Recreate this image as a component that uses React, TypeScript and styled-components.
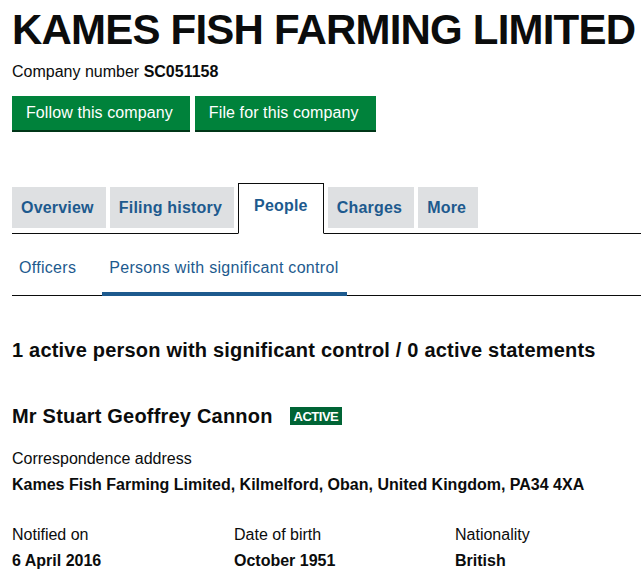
import styled, { createGlobalStyle } from 'styled-components'

const GlobalStyle = createGlobalStyle`
  body {
    margin: 0;
    background: #ffffff;
    color: #0b0c0c;
    font-family: "Liberation Sans", Arial, sans-serif;
  }
`

const Page = styled.main`
  padding: 0 0 0 12px;
  overflow: hidden;
  width: 641px;
  box-sizing: border-box;
`

const Heading = styled.h1`
  margin: 0;
  padding-top: 7px;
  font-size: 42px;
  line-height: 45px;
  font-weight: 700;
  white-space: nowrap;
  letter-spacing: -0.8px;
`

const CompanyNumber = styled.p`
  margin: 10px 0 0;
  font-size: 16px;
  line-height: 20px;
  strong { font-weight: 700; }
`

const Actions = styled.div`
  display: flex;
  gap: 5px;
  margin-top: 14px;
`

const Button = styled.a`
  display: inline-flex;
  align-items: center;
  height: 34px;
  padding: 0 17px 0 14px;
  background: #00823b;
  color: #ffffff;
  font-size: 16px;
  letter-spacing: 0.1px;
  box-shadow: 0 2px 0 #003618;
  text-decoration: none;
  cursor: pointer;
`

const Tabs = styled.nav`
  display: flex;
  align-items: flex-end;
  gap: 4px;
  margin-top: 53px;
  border-bottom: 1px solid #0b0c0c;
`

const Tab = styled.a<{ $active?: boolean }>`
  display: flex;
  align-items: center;
  box-sizing: border-box;
  height: ${p => (p.$active ? '51px' : '41px')};
  margin-bottom: ${p => (p.$active ? '-1px' : '5px')};
  padding: ${p => (p.$active ? '0 15px 6px' : '0 12px 0 9px')};
  background: ${p => (p.$active ? '#ffffff' : '#dee0e2')};
  border: ${p => (p.$active ? '1px solid #0b0c0c' : 'none')};
  border-bottom: ${p => (p.$active ? '1px solid #ffffff' : 'none')};
  color: #1d5a8e;
  font-size: 16px;
  font-weight: 700;
  letter-spacing: 0.2px;
  text-decoration: none;
  white-space: nowrap;
`

const SubNav = styled.nav`
  display: flex;
  margin-top: 22px;
  border-bottom: 1px solid #0b0c0c;
`

const SubLink = styled.a<{ $active?: boolean }>`
  display: block;
  padding: ${p => (p.$active ? '0 8px 12px 7px' : '0 7px 12px')};
  margin-right: ${p => (p.$active ? '0' : '19px')};
  color: #1d5a8e;
  font-size: 16px;
  line-height: 24px;
  letter-spacing: 0.3px;
  border-bottom: 4px solid ${p => (p.$active ? '#1d5a8e' : 'transparent')};
  margin-bottom: -1px;
  text-decoration: none;
  white-space: nowrap;
`

const Summary = styled.h2`
  margin: 42px 0 0;
  font-size: 20px;
  line-height: 24px;
  font-weight: 700;
  letter-spacing: 0.2px;
  white-space: nowrap;
`

const PersonName = styled.h3`
  display: flex;
  align-items: center;
  gap: 17px;
  margin: 42px 0 0;
  font-size: 20px;
  line-height: 24px;
  font-weight: 700;
  letter-spacing: 0.2px;
`

const Badge = styled.span`
  display: inline-block;
  padding: 2px 4px 1px;
  background: #006435;
  color: #ffffff;
  font-size: 13px;
  line-height: 15px;
  font-weight: 700;
  letter-spacing: -0.5px;
`

const Label = styled.div`
  font-size: 16px;
  line-height: 20px;
`

const Value = styled.div`
  margin-top: 6px;
  font-size: 16px;
  line-height: 20px;
  font-weight: 700;
  white-space: nowrap;
`

const Address = styled.div`
  margin-top: 21px;
`

const Facts = styled.div`
  display: grid;
  grid-template-columns: 222px 221px 1fr;
  margin-top: 30px;
`

export default function App() {
  return (
    <Page>
      <GlobalStyle />
      <Heading>KAMES FISH FARMING LIMITED</Heading>
      <CompanyNumber>
        Company number <strong>SC051158</strong>
      </CompanyNumber>
      <Actions>
        <Button>Follow this company</Button>
        <Button>File for this company</Button>
      </Actions>

      <Tabs>
        <Tab>Overview</Tab>
        <Tab>Filing history</Tab>
        <Tab $active>People</Tab>
        <Tab>Charges</Tab>
        <Tab>More</Tab>
      </Tabs>

      <SubNav>
        <SubLink>Officers</SubLink>
        <SubLink $active>Persons with significant control</SubLink>
      </SubNav>

      <Summary>1 active person with significant control / 0 active statements</Summary>

      <PersonName>
        Mr Stuart Geoffrey Cannon <Badge>ACTIVE</Badge>
      </PersonName>

      <Address>
        <Label>Correspondence address</Label>
        <Value>Kames Fish Farming Limited, Kilmelford, Oban, United Kingdom, PA34 4XA</Value>
      </Address>

      <Facts>
        <div>
          <Label>Notified on</Label>
          <Value>6 April 2016</Value>
        </div>
        <div>
          <Label>Date of birth</Label>
          <Value>October 1951</Value>
        </div>
        <div>
          <Label>Nationality</Label>
          <Value>British</Value>
        </div>
      </Facts>
    </Page>
  )
}
